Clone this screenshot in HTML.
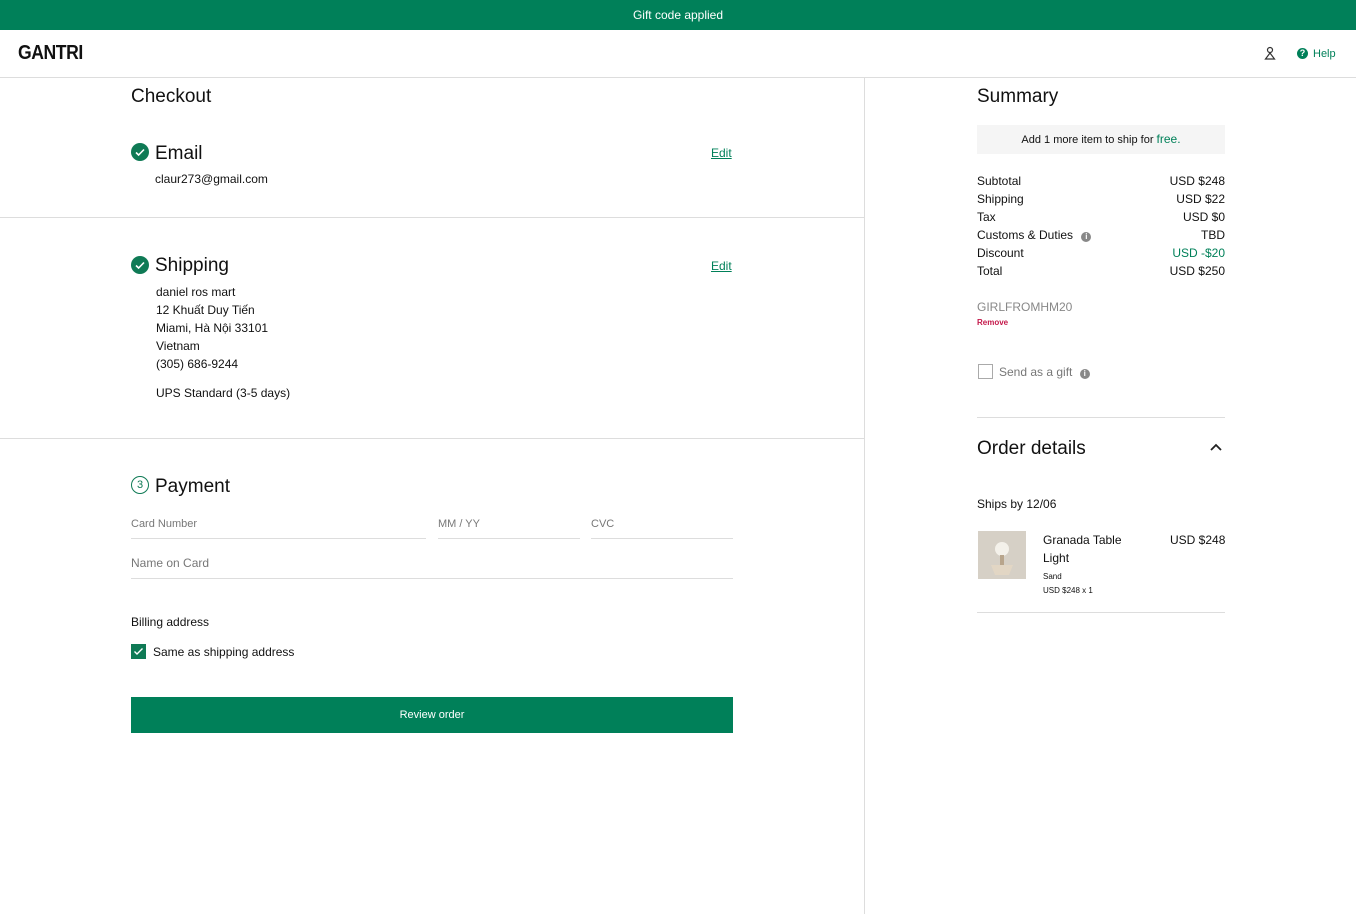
<!DOCTYPE html>
<html><head><meta charset="utf-8"><style>
*{box-sizing:border-box;margin:0;padding:0}
body{width:1356px;height:914px;overflow:hidden;background:#fff;font-family:"Liberation Sans",sans-serif;color:#111;position:relative;font-size:12px}
.a{position:absolute}
.t{margin-top:1px}
.green{color:#008059}
.line{position:absolute;height:1px;background:#ddd}
.field{position:absolute;font-size:11px;color:#777;border-bottom:1px solid #ddd;padding-bottom:8px}
.r{position:absolute;font-size:12px;width:248px;left:977px;margin-top:1px}
.r span{float:right}
</style></head><body>
<div class="a" style="left:0;top:0;width:1356px;height:30px;background:#008059;color:#fff;text-align:center;font-size:12px;line-height:30px">Gift code applied</div>
<div class="a" style="left:18px;top:42px;font-size:20px;font-weight:bold;letter-spacing:-0.5px;transform:scaleX(0.88);transform-origin:left">GANTRI</div>
<svg class="a" style="left:1264px;top:46px" width="12" height="14" viewBox="0 0 12 14"><circle cx="6" cy="4" r="2.5" fill="none" stroke="#333" stroke-width="1.2"/><path d="M1.5 13 L6 7 L10.5 13 Z" fill="none" stroke="#333" stroke-width="1.2"/></svg>
<div class="a" style="left:1297px;top:48px;width:11px;height:11px;border-radius:50%;background:#008059;color:#fff;font-size:9px;text-align:center;line-height:11px;font-weight:bold">?</div>
<div class="a green" style="left:1313px;top:48px;font-size:11px">Help</div>
<div class="line" style="left:0;top:77px;width:1356px"></div>
<div class="a" style="left:864px;top:77px;width:1px;height:837px;background:#ddd"></div>

<div class="a t" style="left:131px;top:85px;font-size:19px">Checkout</div>
<svg class="a" style="left:131px;top:143px" width="18" height="18"><circle cx="9" cy="9" r="9" fill="#0f7a55"/><path d="M5 9.5l2.6 2.5L13 6.5" stroke="#fff" stroke-width="1.6" fill="none"/></svg>
<div class="a t" style="left:155px;top:142px;font-size:19px">Email</div>
<div class="a green t" style="left:711px;top:145px;font-size:12px;text-decoration:underline">Edit</div>
<div class="a t" style="left:155px;top:171px;font-size:12px">claur273@gmail.com</div>
<div class="line" style="left:0;top:217px;width:864px"></div>

<svg class="a" style="left:131px;top:256px" width="18" height="18"><circle cx="9" cy="9" r="9" fill="#0f7a55"/><path d="M5 9.5l2.6 2.5L13 6.5" stroke="#fff" stroke-width="1.6" fill="none"/></svg>
<div class="a t" style="left:155px;top:254px;font-size:19px">Shipping</div>
<div class="a green t" style="left:711px;top:258px;font-size:12px;text-decoration:underline">Edit</div>
<div class="a t" style="left:156px;top:282px;font-size:12px;line-height:18px">daniel ros mart<br>12 Khuất Duy Tiến<br>Miami, Hà Nội 33101<br>Vietnam<br>(305) 686-9244</div>
<div class="a t" style="left:156px;top:385px;font-size:12px">UPS Standard (3-5 days)</div>
<div class="line" style="left:0;top:438px;width:864px"></div>

<div class="a" style="left:131px;top:476px;width:18px;height:18px;border:1px solid #0f7a55;border-radius:50%;font-size:11px;text-align:center;line-height:16px;color:#0f7a55">3</div>
<div class="a t" style="left:155px;top:475px;font-size:19px">Payment</div>
<div class="field" style="left:131px;top:518px;width:295px">Card Number</div>
<div class="field" style="left:438px;top:518px;width:142px">MM / YY</div>
<div class="field" style="left:591px;top:518px;width:142px">CVC</div>
<div class="field" style="left:131px;top:556px;width:602px;font-size:12px">Name on Card</div>
<div class="a t" style="left:131px;top:614px;font-size:12px">Billing address</div>
<svg class="a" style="left:131px;top:644px" width="15" height="15"><rect width="15" height="15" fill="#0f7a55"/><path d="M3.5 7.5l2.5 2.5L11.5 4.5" stroke="#fff" stroke-width="1.4" fill="none"/></svg>
<div class="a t" style="left:153px;top:644px;font-size:12px">Same as shipping address</div>
<div class="a" style="left:131px;top:697px;width:602px;height:36px;background:#008059;color:#fff;text-align:center;line-height:37px;font-size:11px">Review order</div>

<div class="a t" style="left:977px;top:85px;font-size:19px">Summary</div>
<div class="a" style="left:977px;top:125px;width:248px;height:29px;background:#f5f5f5;text-align:center;line-height:29px;font-size:11px">Add 1 more item to ship for <span class="green" style="font-size:12px">free.</span></div>
<div class="r" style="top:173px">Subtotal<span>USD $248</span></div>
<div class="r" style="top:191px">Shipping<span>USD $22</span></div>
<div class="r" style="top:209px">Tax<span>USD $0</span></div>
<div class="r" style="top:227px">Customs &amp; Duties <b style="display:inline-block;width:10px;height:10px;border-radius:50%;background:#888;color:#fff;font-size:8px;text-align:center;line-height:10px;margin-left:5px">i</b><span>TBD</span></div>
<div class="r" style="top:245px">Discount<span class="green">USD -$20</span></div>
<div class="r" style="top:263px">Total<span>USD $250</span></div>
<div class="a t" style="left:977px;top:299px;font-size:12px;color:#888">GIRLFROMHM20</div>
<div class="a t" style="left:977px;top:317px;font-size:8px;color:#c4184a;font-weight:bold">Remove</div>
<div class="a" style="left:978px;top:364px;width:15px;height:15px;border:1px solid #aaa"></div>
<div class="a t" style="left:999px;top:364px;font-size:12px;color:#777">Send as a gift <b style="display:inline-block;width:10px;height:10px;border-radius:50%;background:#888;color:#fff;font-size:8px;text-align:center;line-height:10px;margin-left:4px">i</b></div>
<div class="line" style="left:977px;top:417px;width:248px"></div>
<div class="a t" style="left:977px;top:437px;font-size:19px">Order details</div>
<svg class="a" style="left:1209px;top:442px" width="14" height="10"><path d="M2 8l5-5 5 5" stroke="#222" stroke-width="1.8" fill="none"/></svg>
<div class="a t" style="left:977px;top:496px;font-size:12px">Ships by 12/06</div>
<svg class="a" style="left:978px;top:531px" width="48" height="48"><rect width="48" height="48" fill="#d6d0c6"/><circle cx="24" cy="18" r="7" fill="#f4f1ea"/><rect x="22" y="24" width="4" height="10" fill="#b8a58c"/><path d="M13 34h22l-4 10H17z" fill="#e2d6c4"/></svg>
<div class="a" style="left:1043px;top:531px;font-size:12px;line-height:18px">Granada Table<br>Light</div>
<div class="a t" style="left:1170px;top:532px;font-size:12px">USD $248</div>
<div class="a t" style="left:1043px;top:571px;font-size:8px">Sand</div>
<div class="a t" style="left:1043px;top:585px;font-size:8px">USD $248 x 1</div>
<div class="line" style="left:977px;top:612px;width:248px"></div>
</body></html>
